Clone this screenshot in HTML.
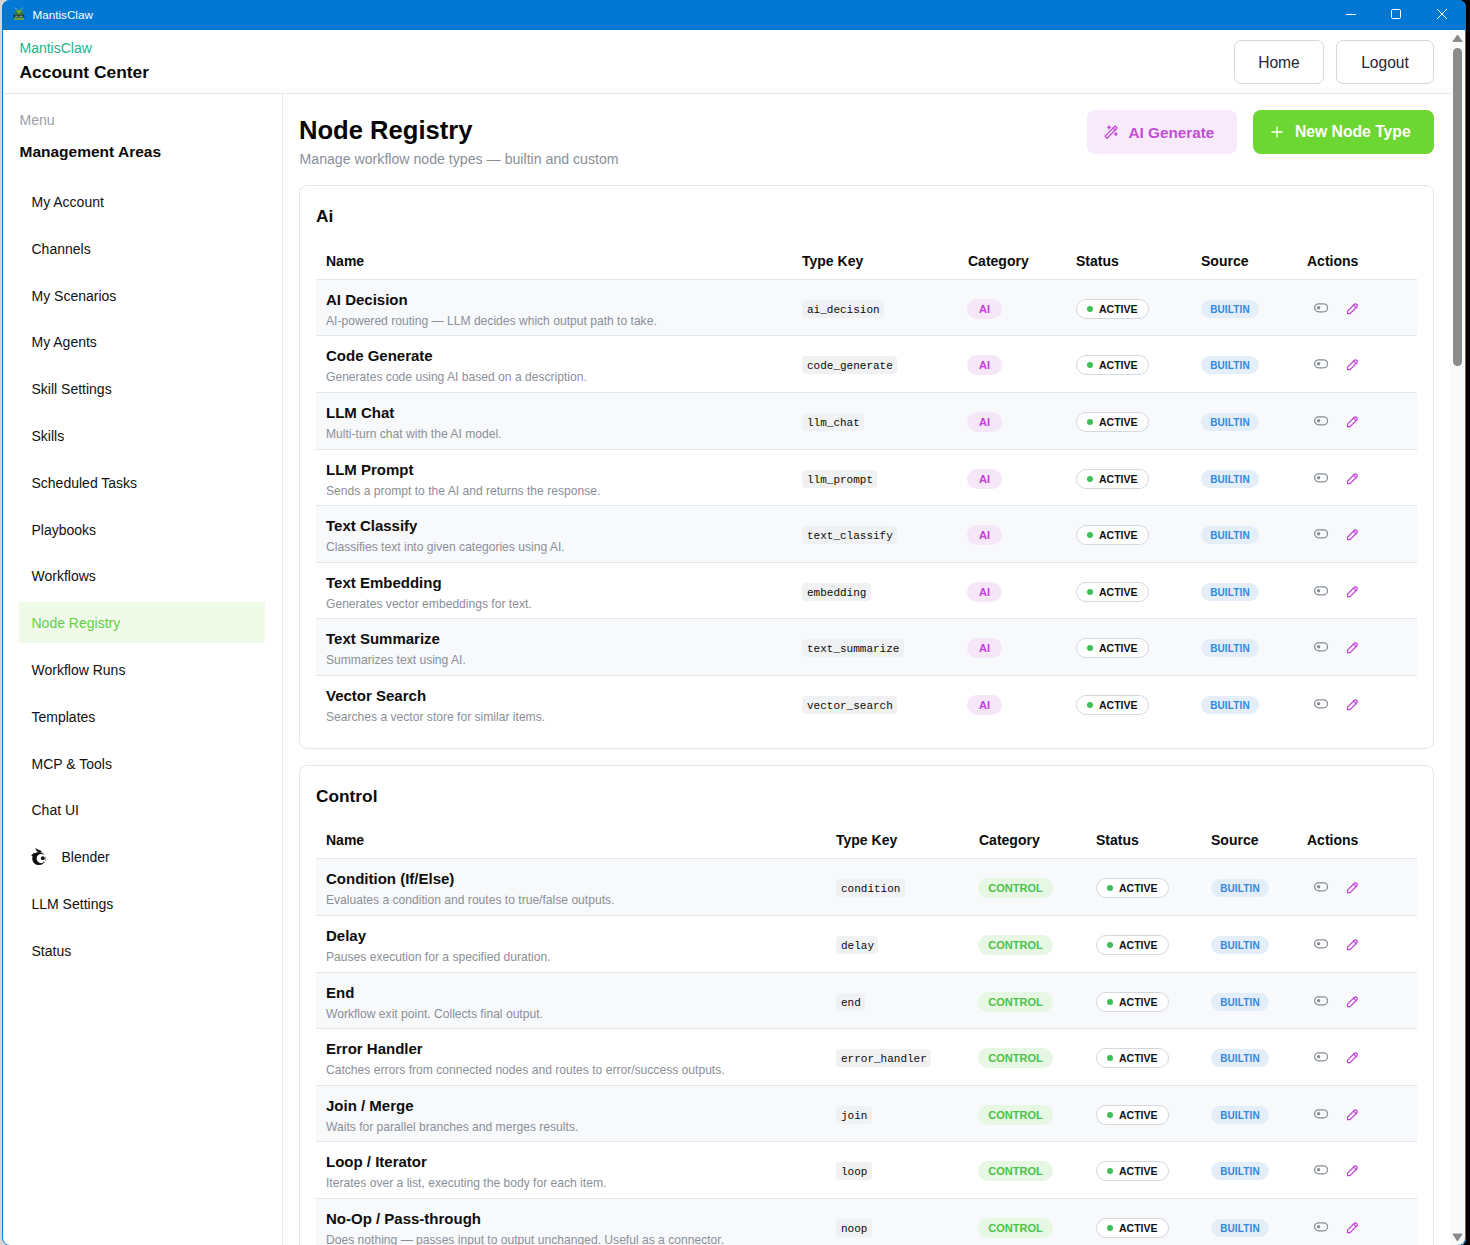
<!DOCTYPE html><html><head><meta charset="utf-8"><style>
*{box-sizing:border-box;margin:0;padding:0}
html,body{width:1470px;height:1245px;overflow:hidden;background:#000;font-family:"Liberation Sans",sans-serif;color:#111;position:relative}
.a{position:absolute;line-height:1;white-space:nowrap}
#bgl{position:absolute;left:0;top:0;width:700px;height:1245px;background:#d8d5d2}
#clip{position:absolute;left:2px;top:0;width:1464px;height:1246px;border-radius:8px;overflow:hidden;background:#fff}
#inner{position:absolute;left:-2px;top:0;width:1470px;height:1247px}
#frame{position:absolute;left:2px;top:0;width:1464px;height:1246px;border:1px solid #0078d4;border-radius:8px}
#title{position:absolute;left:0;top:0;width:1470px;height:30px;background:#0078d4}
.btn{position:absolute;border:1px solid #d3d8df;border-radius:7px;background:#fff;font-size:15.6px;color:#1f2533}
.nav{position:absolute;left:19px;width:246px;height:41px}
.nav span{position:absolute;left:12.5px;top:14.2px;font-size:14px;line-height:1;color:#111}
.nav.on{background:#effbe8}
.nav.on span{color:#67cf45}
.card{position:absolute;left:299px;width:1135px;border:1px solid #e3e7ec;border-radius:8px;background:#fff}
.th{position:absolute;font-size:14px;font-weight:bold;line-height:1;color:#0b0b0b}
.row{position:absolute;left:316px;width:1101px}
.row.g{background:#f8f9fb}
.ln{position:absolute;left:316px;width:1101px;height:1px;background:#e3e7ec}
.nm{position:absolute;left:10px;font-size:15px;font-weight:bold;line-height:1;color:#0d0d0d}
.ds{position:absolute;left:10px;font-size:12.1px;line-height:1;color:#8a8f98}
.code{position:absolute;height:18px;background:#f0f1f3;border-radius:4px;font-family:"Liberation Mono",monospace;font-size:11px;line-height:20px;padding:0 4.4px 0 5px;color:#0a0a0a}
.bdg{position:absolute;height:20px;border-radius:10px;font-size:11px;font-weight:bold;line-height:20px;text-align:center}
.ai{background:#f5e6f8;color:#c23fd8}
.ctl{background:#e6f7e4;color:#4cc14a}
.act{position:absolute;height:20px;border:1px solid #d3d8df;border-radius:10px;background:#fff;font-size:10.5px;font-weight:bold;line-height:18px;color:#111}
.act i{position:absolute;left:10px;top:6px;width:6px;height:6px;border-radius:3px;background:#3fbf55}
.act b{position:absolute;left:22px;top:0}
.blt{position:absolute;height:18px;border-radius:9px;background:#e4eef9;color:#3388e0;font-size:10px;font-weight:bold;line-height:20px;text-align:center;letter-spacing:0.15px}
.ic{position:absolute}
</style></head><body>
<div id="bgl"></div><div id="clip"><div id="inner"><div id="title"></div>
<svg class="ic" style="left:13px;top:6.5px" width="12" height="14" viewBox="0 0 12 14"><path d="M2.2 0.8 L4.6 3.4 M9.8 0.8 L7.4 3.4" stroke="#8cc7a0" stroke-width="0.9" stroke-linecap="round"/><path d="M1.2 8 C1.2 4.5 3 2.8 6 2.8 C9 2.8 10.8 4.5 10.8 8 Z" fill="#4f8a2c"/><ellipse cx="6" cy="4.6" rx="1.6" ry="1.4" fill="#7bb33e"/><ellipse cx="3" cy="6.3" rx="1.1" ry="1.2" fill="#1f6f6a"/><ellipse cx="9" cy="6.3" rx="1.1" ry="1.2" fill="#1f6f6a"/><rect x="0.6" y="7.8" width="10.8" height="2.8" rx="0.6" fill="#16261b"/><rect x="2" y="8.7" width="3.2" height="1" fill="#9db3bd"/><rect x="6.2" y="8.7" width="3.8" height="1" fill="#9db3bd"/><rect x="1" y="10.6" width="10" height="2.4" rx="0.5" fill="#6f9b38"/></svg>
<div class="a" style="left:32.5px;top:8.90px;font-size:11.7px;color:#fff">MantisClaw</div>
<div style="position:absolute;left:1346px;top:14px;width:10px;height:1px;background:#fff"></div>
<div style="position:absolute;left:1391px;top:9px;width:10px;height:10px;border:1px solid #fff;border-radius:1.5px"></div>
<svg class="ic" style="left:1436px;top:8px" width="12" height="12" viewBox="0 0 12 12"><path d="M1 1 L11 11 M11 1 L1 11" stroke="#fff" stroke-width="1"/></svg>
<div class="a" style="left:19.5px;top:41.05px;font-size:14px;color:#22b38c">MantisClaw</div>
<div class="a" style="left:19.5px;top:63.87px;font-size:17.4px;font-weight:bold;color:#0a0a0a">Account Center</div>
<div class="btn" style="left:1234px;top:40px;width:90px;height:44px"><span class="a" style="left:0;width:88px;text-align:center;top:14.1px">Home</span></div>
<div class="btn" style="left:1336px;top:40px;width:98px;height:44px"><span class="a" style="left:0;width:96px;text-align:center;top:14.1px">Logout</span></div>
<div style="position:absolute;left:3px;top:93px;width:1447px;height:1px;background:#e3e7ec"></div>
<div style="position:absolute;left:282px;top:94px;width:1px;height:1160px;background:#e3e7ec"></div>
<div class="a" style="left:19.5px;top:112.95px;font-size:14px;color:#9aa0a8">Menu</div>
<div class="a" style="left:19.5px;top:144.26px;font-size:15.5px;font-weight:bold;color:#0a0a0a">Management Areas</div>
<div class="nav" style="top:180.80px"><span>My Account</span></div>
<div class="nav" style="top:227.60px"><span>Channels</span></div>
<div class="nav" style="top:274.40px"><span>My Scenarios</span></div>
<div class="nav" style="top:321.20px"><span>My Agents</span></div>
<div class="nav" style="top:368.00px"><span>Skill Settings</span></div>
<div class="nav" style="top:414.80px"><span>Skills</span></div>
<div class="nav" style="top:461.60px"><span>Scheduled Tasks</span></div>
<div class="nav" style="top:508.40px"><span>Playbooks</span></div>
<div class="nav" style="top:555.20px"><span>Workflows</span></div>
<div class="nav on" style="top:602.00px"><span>Node Registry</span></div>
<div class="nav" style="top:648.80px"><span>Workflow Runs</span></div>
<div class="nav" style="top:695.60px"><span>Templates</span></div>
<div class="nav" style="top:742.40px"><span>MCP &amp; Tools</span></div>
<div class="nav" style="top:789.20px"><span>Chat UI</span></div>
<div class="nav" style="top:836.00px"><svg class="ic" style="left:11px;top:11.00px" width="17" height="19" viewBox="0 0 17 19"><path fill-rule="evenodd" fill="#111" d="M2.2 11.5 A6.6 6.6 0 1 0 15.4 11.5 A6.6 6.6 0 1 0 2.2 11.5 Z M6.6 11.6 A4.6 4.6 0 1 0 15.8 11.6 A4.6 4.6 0 1 0 6.6 11.6 Z"/><circle cx="12.8" cy="11.2" r="1.9" fill="#111"/><path d="M5 1 L12 4.3 L10 5.6 L7 4.6 Z" fill="#111"/><path d="M1 8.6 L4 5.9 L6.2 6.4 L3.2 9.2 Z" fill="#111"/><circle cx="13.8" cy="15.2" r="0.6" fill="#111"/></svg><span style="left:42.5px">Blender</span></div>
<div class="nav" style="top:882.80px"><span>LLM Settings</span></div>
<div class="nav" style="top:929.60px"><span>Status</span></div>
<div class="a" style="left:299px;top:117.63px;font-size:25.6px;font-weight:bold;color:#050505">Node Registry</div>
<div class="a" style="left:299.5px;top:152.02px;font-size:14.15px;color:#8a9099">Manage workflow node types — builtin and custom</div>
<div style="position:absolute;left:1087px;top:110px;width:150px;height:44px;background:#f7eafb;border-radius:8px"></div>
<svg class="ic" style="left:1103px;top:123.5px" width="16.2" height="16.2" viewBox="0 0 24 24" fill="none" stroke="#c44dd8" stroke-width="2" stroke-linecap="round" stroke-linejoin="round"><path d="M6 21l15 -15l-3 -3l-15 15l3 3"/><path d="M15 6l3 3"/><path d="M9 3a2 2 0 0 0 2 2a2 2 0 0 0 -2 2a2 2 0 0 0 -2 -2a2 2 0 0 0 2 -2"/><path d="M19 13a2 2 0 0 0 2 2a2 2 0 0 0 -2 2a2 2 0 0 0 -2 -2a2 2 0 0 0 2 -2"/></svg>
<div class="a" style="left:1128.5px;top:124.65px;font-size:15.3px;font-weight:bold;color:#c44dd8">AI Generate</div>
<div style="position:absolute;left:1253px;top:110px;width:181px;height:44px;background:#6cd632;border-radius:8px"></div>
<svg class="ic" style="left:1271px;top:126px" width="12" height="12" viewBox="0 0 12 12"><path d="M6 0.5 V11.5 M0.5 6 H11.5" stroke="#fff" stroke-width="1.3"/></svg>
<div class="a" style="left:1295px;top:124.31px;font-size:15.7px;font-weight:bold;color:#fff">New Node Type</div>
<div class="card" style="top:185px;height:564px"></div>
<div class="a" style="left:316px;top:207.96px;font-size:17.3px;font-weight:bold;color:#0a0a0a">Ai</div>
<div class="th" style="left:326px;top:254.05px">Name</div>
<div class="th" style="left:802px;top:254.05px">Type Key</div>
<div class="th" style="left:968px;top:254.05px">Category</div>
<div class="th" style="left:1076px;top:254.05px">Status</div>
<div class="th" style="left:1201px;top:254.05px">Source</div>
<div class="th" style="left:1307px;top:254.05px">Actions</div>
<div class="ln" style="top:279px"></div>
<div class="row g" style="top:280px;height:55px">
<div class="nm" style="top:12.20px">AI Decision</div>
<div class="ds" style="top:34.56px">AI-powered routing — LLM decides which output path to take.</div>
</div>
<div class="code" style="left:802px;top:300.00px">ai_decision</div>
<div class="bdg ai" style="left:967px;top:299.00px;width:35px">AI</div>
<div class="act" style="left:1076px;top:299.30px;width:73px"><i></i><b>ACTIVE</b></div>
<div class="blt" style="left:1201px;top:300.00px;width:58px">BUILTIN</div>
<svg class="ic" style="left:1313px;top:302.20px" width="16" height="11" viewBox="0 0 16 11"><rect x="1.6" y="1.8" width="13" height="8" rx="4" fill="none" stroke="#878e98" stroke-width="1.25"/><circle cx="5.6" cy="5.8" r="1.7" fill="#878e98"/></svg>
<svg class="ic" style="left:1345.3px;top:301.20px" width="15.2" height="15.2" viewBox="0 0 24 24" fill="none" stroke="#c23fd8" stroke-width="1.9" stroke-linecap="round" stroke-linejoin="round"><path d="M4 20h4l10.5 -10.5a2.828 2.828 0 1 0 -4 -4l-10.5 10.5v4"/><path d="M13.5 6.5l4 4"/></svg>
<div class="ln" style="top:335px"></div>
<div class="row" style="top:336px;height:56px">
<div class="nm" style="top:12.20px">Code Generate</div>
<div class="ds" style="top:34.56px">Generates code using AI based on a description.</div>
</div>
<div class="code" style="left:802px;top:356.00px">code_generate</div>
<div class="bdg ai" style="left:967px;top:355.00px;width:35px">AI</div>
<div class="act" style="left:1076px;top:355.30px;width:73px"><i></i><b>ACTIVE</b></div>
<div class="blt" style="left:1201px;top:356.00px;width:58px">BUILTIN</div>
<svg class="ic" style="left:1313px;top:358.20px" width="16" height="11" viewBox="0 0 16 11"><rect x="1.6" y="1.8" width="13" height="8" rx="4" fill="none" stroke="#878e98" stroke-width="1.25"/><circle cx="5.6" cy="5.8" r="1.7" fill="#878e98"/></svg>
<svg class="ic" style="left:1345.3px;top:357.20px" width="15.2" height="15.2" viewBox="0 0 24 24" fill="none" stroke="#c23fd8" stroke-width="1.9" stroke-linecap="round" stroke-linejoin="round"><path d="M4 20h4l10.5 -10.5a2.828 2.828 0 1 0 -4 -4l-10.5 10.5v4"/><path d="M13.5 6.5l4 4"/></svg>
<div class="ln" style="top:392px"></div>
<div class="row g" style="top:393px;height:56px">
<div class="nm" style="top:12.20px">LLM Chat</div>
<div class="ds" style="top:34.56px">Multi-turn chat with the AI model.</div>
</div>
<div class="code" style="left:802px;top:413.00px">llm_chat</div>
<div class="bdg ai" style="left:967px;top:412.00px;width:35px">AI</div>
<div class="act" style="left:1076px;top:412.30px;width:73px"><i></i><b>ACTIVE</b></div>
<div class="blt" style="left:1201px;top:413.00px;width:58px">BUILTIN</div>
<svg class="ic" style="left:1313px;top:415.20px" width="16" height="11" viewBox="0 0 16 11"><rect x="1.6" y="1.8" width="13" height="8" rx="4" fill="none" stroke="#878e98" stroke-width="1.25"/><circle cx="5.6" cy="5.8" r="1.7" fill="#878e98"/></svg>
<svg class="ic" style="left:1345.3px;top:414.20px" width="15.2" height="15.2" viewBox="0 0 24 24" fill="none" stroke="#c23fd8" stroke-width="1.9" stroke-linecap="round" stroke-linejoin="round"><path d="M4 20h4l10.5 -10.5a2.828 2.828 0 1 0 -4 -4l-10.5 10.5v4"/><path d="M13.5 6.5l4 4"/></svg>
<div class="ln" style="top:449px"></div>
<div class="row" style="top:450px;height:55px">
<div class="nm" style="top:12.20px">LLM Prompt</div>
<div class="ds" style="top:34.56px">Sends a prompt to the AI and returns the response.</div>
</div>
<div class="code" style="left:802px;top:470.00px">llm_prompt</div>
<div class="bdg ai" style="left:967px;top:469.00px;width:35px">AI</div>
<div class="act" style="left:1076px;top:469.30px;width:73px"><i></i><b>ACTIVE</b></div>
<div class="blt" style="left:1201px;top:470.00px;width:58px">BUILTIN</div>
<svg class="ic" style="left:1313px;top:472.20px" width="16" height="11" viewBox="0 0 16 11"><rect x="1.6" y="1.8" width="13" height="8" rx="4" fill="none" stroke="#878e98" stroke-width="1.25"/><circle cx="5.6" cy="5.8" r="1.7" fill="#878e98"/></svg>
<svg class="ic" style="left:1345.3px;top:471.20px" width="15.2" height="15.2" viewBox="0 0 24 24" fill="none" stroke="#c23fd8" stroke-width="1.9" stroke-linecap="round" stroke-linejoin="round"><path d="M4 20h4l10.5 -10.5a2.828 2.828 0 1 0 -4 -4l-10.5 10.5v4"/><path d="M13.5 6.5l4 4"/></svg>
<div class="ln" style="top:505px"></div>
<div class="row g" style="top:506px;height:56px">
<div class="nm" style="top:12.20px">Text Classify</div>
<div class="ds" style="top:34.56px">Classifies text into given categories using AI.</div>
</div>
<div class="code" style="left:802px;top:526.00px">text_classify</div>
<div class="bdg ai" style="left:967px;top:525.00px;width:35px">AI</div>
<div class="act" style="left:1076px;top:525.30px;width:73px"><i></i><b>ACTIVE</b></div>
<div class="blt" style="left:1201px;top:526.00px;width:58px">BUILTIN</div>
<svg class="ic" style="left:1313px;top:528.20px" width="16" height="11" viewBox="0 0 16 11"><rect x="1.6" y="1.8" width="13" height="8" rx="4" fill="none" stroke="#878e98" stroke-width="1.25"/><circle cx="5.6" cy="5.8" r="1.7" fill="#878e98"/></svg>
<svg class="ic" style="left:1345.3px;top:527.20px" width="15.2" height="15.2" viewBox="0 0 24 24" fill="none" stroke="#c23fd8" stroke-width="1.9" stroke-linecap="round" stroke-linejoin="round"><path d="M4 20h4l10.5 -10.5a2.828 2.828 0 1 0 -4 -4l-10.5 10.5v4"/><path d="M13.5 6.5l4 4"/></svg>
<div class="ln" style="top:562px"></div>
<div class="row" style="top:563px;height:55px">
<div class="nm" style="top:12.20px">Text Embedding</div>
<div class="ds" style="top:34.56px">Generates vector embeddings for text.</div>
</div>
<div class="code" style="left:802px;top:583.00px">embedding</div>
<div class="bdg ai" style="left:967px;top:582.00px;width:35px">AI</div>
<div class="act" style="left:1076px;top:582.30px;width:73px"><i></i><b>ACTIVE</b></div>
<div class="blt" style="left:1201px;top:583.00px;width:58px">BUILTIN</div>
<svg class="ic" style="left:1313px;top:585.20px" width="16" height="11" viewBox="0 0 16 11"><rect x="1.6" y="1.8" width="13" height="8" rx="4" fill="none" stroke="#878e98" stroke-width="1.25"/><circle cx="5.6" cy="5.8" r="1.7" fill="#878e98"/></svg>
<svg class="ic" style="left:1345.3px;top:584.20px" width="15.2" height="15.2" viewBox="0 0 24 24" fill="none" stroke="#c23fd8" stroke-width="1.9" stroke-linecap="round" stroke-linejoin="round"><path d="M4 20h4l10.5 -10.5a2.828 2.828 0 1 0 -4 -4l-10.5 10.5v4"/><path d="M13.5 6.5l4 4"/></svg>
<div class="ln" style="top:618px"></div>
<div class="row g" style="top:619px;height:56px">
<div class="nm" style="top:12.20px">Text Summarize</div>
<div class="ds" style="top:34.56px">Summarizes text using AI.</div>
</div>
<div class="code" style="left:802px;top:639.00px">text_summarize</div>
<div class="bdg ai" style="left:967px;top:638.00px;width:35px">AI</div>
<div class="act" style="left:1076px;top:638.30px;width:73px"><i></i><b>ACTIVE</b></div>
<div class="blt" style="left:1201px;top:639.00px;width:58px">BUILTIN</div>
<svg class="ic" style="left:1313px;top:641.20px" width="16" height="11" viewBox="0 0 16 11"><rect x="1.6" y="1.8" width="13" height="8" rx="4" fill="none" stroke="#878e98" stroke-width="1.25"/><circle cx="5.6" cy="5.8" r="1.7" fill="#878e98"/></svg>
<svg class="ic" style="left:1345.3px;top:640.20px" width="15.2" height="15.2" viewBox="0 0 24 24" fill="none" stroke="#c23fd8" stroke-width="1.9" stroke-linecap="round" stroke-linejoin="round"><path d="M4 20h4l10.5 -10.5a2.828 2.828 0 1 0 -4 -4l-10.5 10.5v4"/><path d="M13.5 6.5l4 4"/></svg>
<div class="ln" style="top:675px"></div>
<div class="row" style="top:676px;height:56px">
<div class="nm" style="top:12.20px">Vector Search</div>
<div class="ds" style="top:34.56px">Searches a vector store for similar items.</div>
</div>
<div class="code" style="left:802px;top:696.00px">vector_search</div>
<div class="bdg ai" style="left:967px;top:695.00px;width:35px">AI</div>
<div class="act" style="left:1076px;top:695.30px;width:73px"><i></i><b>ACTIVE</b></div>
<div class="blt" style="left:1201px;top:696.00px;width:58px">BUILTIN</div>
<svg class="ic" style="left:1313px;top:698.20px" width="16" height="11" viewBox="0 0 16 11"><rect x="1.6" y="1.8" width="13" height="8" rx="4" fill="none" stroke="#878e98" stroke-width="1.25"/><circle cx="5.6" cy="5.8" r="1.7" fill="#878e98"/></svg>
<svg class="ic" style="left:1345.3px;top:697.20px" width="15.2" height="15.2" viewBox="0 0 24 24" fill="none" stroke="#c23fd8" stroke-width="1.9" stroke-linecap="round" stroke-linejoin="round"><path d="M4 20h4l10.5 -10.5a2.828 2.828 0 1 0 -4 -4l-10.5 10.5v4"/><path d="M13.5 6.5l4 4"/></svg>
<div class="card" style="top:765px;height:700px"></div>
<div class="a" style="left:316px;top:787.96px;font-size:17.3px;font-weight:bold;color:#0a0a0a">Control</div>
<div class="th" style="left:326px;top:833.35px">Name</div>
<div class="th" style="left:836px;top:833.35px">Type Key</div>
<div class="th" style="left:979px;top:833.35px">Category</div>
<div class="th" style="left:1096px;top:833.35px">Status</div>
<div class="th" style="left:1211px;top:833.35px">Source</div>
<div class="th" style="left:1307px;top:833.35px">Actions</div>
<div class="ln" style="top:858px"></div>
<div class="row g" style="top:859px;height:56px">
<div class="nm" style="top:12.20px">Condition (If/Else)</div>
<div class="ds" style="top:34.56px">Evaluates a condition and routes to true/false outputs.</div>
</div>
<div class="code" style="left:836px;top:879.00px">condition</div>
<div class="bdg ctl" style="left:978px;top:878.00px;width:75px">CONTROL</div>
<div class="act" style="left:1096px;top:878.30px;width:73px"><i></i><b>ACTIVE</b></div>
<div class="blt" style="left:1211px;top:879.00px;width:58px">BUILTIN</div>
<svg class="ic" style="left:1313px;top:881.20px" width="16" height="11" viewBox="0 0 16 11"><rect x="1.6" y="1.8" width="13" height="8" rx="4" fill="none" stroke="#878e98" stroke-width="1.25"/><circle cx="5.6" cy="5.8" r="1.7" fill="#878e98"/></svg>
<svg class="ic" style="left:1345.3px;top:880.20px" width="15.2" height="15.2" viewBox="0 0 24 24" fill="none" stroke="#c23fd8" stroke-width="1.9" stroke-linecap="round" stroke-linejoin="round"><path d="M4 20h4l10.5 -10.5a2.828 2.828 0 1 0 -4 -4l-10.5 10.5v4"/><path d="M13.5 6.5l4 4"/></svg>
<div class="ln" style="top:915px"></div>
<div class="row" style="top:916px;height:56px">
<div class="nm" style="top:12.20px">Delay</div>
<div class="ds" style="top:34.56px">Pauses execution for a specified duration.</div>
</div>
<div class="code" style="left:836px;top:936.00px">delay</div>
<div class="bdg ctl" style="left:978px;top:935.00px;width:75px">CONTROL</div>
<div class="act" style="left:1096px;top:935.30px;width:73px"><i></i><b>ACTIVE</b></div>
<div class="blt" style="left:1211px;top:936.00px;width:58px">BUILTIN</div>
<svg class="ic" style="left:1313px;top:938.20px" width="16" height="11" viewBox="0 0 16 11"><rect x="1.6" y="1.8" width="13" height="8" rx="4" fill="none" stroke="#878e98" stroke-width="1.25"/><circle cx="5.6" cy="5.8" r="1.7" fill="#878e98"/></svg>
<svg class="ic" style="left:1345.3px;top:937.20px" width="15.2" height="15.2" viewBox="0 0 24 24" fill="none" stroke="#c23fd8" stroke-width="1.9" stroke-linecap="round" stroke-linejoin="round"><path d="M4 20h4l10.5 -10.5a2.828 2.828 0 1 0 -4 -4l-10.5 10.5v4"/><path d="M13.5 6.5l4 4"/></svg>
<div class="ln" style="top:972px"></div>
<div class="row g" style="top:973px;height:55px">
<div class="nm" style="top:12.20px">End</div>
<div class="ds" style="top:34.56px">Workflow exit point. Collects final output.</div>
</div>
<div class="code" style="left:836px;top:993.00px">end</div>
<div class="bdg ctl" style="left:978px;top:992.00px;width:75px">CONTROL</div>
<div class="act" style="left:1096px;top:992.30px;width:73px"><i></i><b>ACTIVE</b></div>
<div class="blt" style="left:1211px;top:993.00px;width:58px">BUILTIN</div>
<svg class="ic" style="left:1313px;top:995.20px" width="16" height="11" viewBox="0 0 16 11"><rect x="1.6" y="1.8" width="13" height="8" rx="4" fill="none" stroke="#878e98" stroke-width="1.25"/><circle cx="5.6" cy="5.8" r="1.7" fill="#878e98"/></svg>
<svg class="ic" style="left:1345.3px;top:994.20px" width="15.2" height="15.2" viewBox="0 0 24 24" fill="none" stroke="#c23fd8" stroke-width="1.9" stroke-linecap="round" stroke-linejoin="round"><path d="M4 20h4l10.5 -10.5a2.828 2.828 0 1 0 -4 -4l-10.5 10.5v4"/><path d="M13.5 6.5l4 4"/></svg>
<div class="ln" style="top:1028px"></div>
<div class="row" style="top:1029px;height:56px">
<div class="nm" style="top:12.20px">Error Handler</div>
<div class="ds" style="top:34.56px">Catches errors from connected nodes and routes to error/success outputs.</div>
</div>
<div class="code" style="left:836px;top:1049.00px">error_handler</div>
<div class="bdg ctl" style="left:978px;top:1048.00px;width:75px">CONTROL</div>
<div class="act" style="left:1096px;top:1048.30px;width:73px"><i></i><b>ACTIVE</b></div>
<div class="blt" style="left:1211px;top:1049.00px;width:58px">BUILTIN</div>
<svg class="ic" style="left:1313px;top:1051.20px" width="16" height="11" viewBox="0 0 16 11"><rect x="1.6" y="1.8" width="13" height="8" rx="4" fill="none" stroke="#878e98" stroke-width="1.25"/><circle cx="5.6" cy="5.8" r="1.7" fill="#878e98"/></svg>
<svg class="ic" style="left:1345.3px;top:1050.20px" width="15.2" height="15.2" viewBox="0 0 24 24" fill="none" stroke="#c23fd8" stroke-width="1.9" stroke-linecap="round" stroke-linejoin="round"><path d="M4 20h4l10.5 -10.5a2.828 2.828 0 1 0 -4 -4l-10.5 10.5v4"/><path d="M13.5 6.5l4 4"/></svg>
<div class="ln" style="top:1085px"></div>
<div class="row g" style="top:1086px;height:55px">
<div class="nm" style="top:12.20px">Join / Merge</div>
<div class="ds" style="top:34.56px">Waits for parallel branches and merges results.</div>
</div>
<div class="code" style="left:836px;top:1106.00px">join</div>
<div class="bdg ctl" style="left:978px;top:1105.00px;width:75px">CONTROL</div>
<div class="act" style="left:1096px;top:1105.30px;width:73px"><i></i><b>ACTIVE</b></div>
<div class="blt" style="left:1211px;top:1106.00px;width:58px">BUILTIN</div>
<svg class="ic" style="left:1313px;top:1108.20px" width="16" height="11" viewBox="0 0 16 11"><rect x="1.6" y="1.8" width="13" height="8" rx="4" fill="none" stroke="#878e98" stroke-width="1.25"/><circle cx="5.6" cy="5.8" r="1.7" fill="#878e98"/></svg>
<svg class="ic" style="left:1345.3px;top:1107.20px" width="15.2" height="15.2" viewBox="0 0 24 24" fill="none" stroke="#c23fd8" stroke-width="1.9" stroke-linecap="round" stroke-linejoin="round"><path d="M4 20h4l10.5 -10.5a2.828 2.828 0 1 0 -4 -4l-10.5 10.5v4"/><path d="M13.5 6.5l4 4"/></svg>
<div class="ln" style="top:1141px"></div>
<div class="row" style="top:1142px;height:56px">
<div class="nm" style="top:12.20px">Loop / Iterator</div>
<div class="ds" style="top:34.56px">Iterates over a list, executing the body for each item.</div>
</div>
<div class="code" style="left:836px;top:1162.00px">loop</div>
<div class="bdg ctl" style="left:978px;top:1161.00px;width:75px">CONTROL</div>
<div class="act" style="left:1096px;top:1161.30px;width:73px"><i></i><b>ACTIVE</b></div>
<div class="blt" style="left:1211px;top:1162.00px;width:58px">BUILTIN</div>
<svg class="ic" style="left:1313px;top:1164.20px" width="16" height="11" viewBox="0 0 16 11"><rect x="1.6" y="1.8" width="13" height="8" rx="4" fill="none" stroke="#878e98" stroke-width="1.25"/><circle cx="5.6" cy="5.8" r="1.7" fill="#878e98"/></svg>
<svg class="ic" style="left:1345.3px;top:1163.20px" width="15.2" height="15.2" viewBox="0 0 24 24" fill="none" stroke="#c23fd8" stroke-width="1.9" stroke-linecap="round" stroke-linejoin="round"><path d="M4 20h4l10.5 -10.5a2.828 2.828 0 1 0 -4 -4l-10.5 10.5v4"/><path d="M13.5 6.5l4 4"/></svg>
<div class="ln" style="top:1198px"></div>
<div class="row g" style="top:1199px;height:55px">
<div class="nm" style="top:12.20px">No-Op / Pass-through</div>
<div class="ds" style="top:34.56px">Does nothing — passes input to output unchanged. Useful as a connector.</div>
</div>
<div class="code" style="left:836px;top:1219.00px">noop</div>
<div class="bdg ctl" style="left:978px;top:1218.00px;width:75px">CONTROL</div>
<div class="act" style="left:1096px;top:1218.30px;width:73px"><i></i><b>ACTIVE</b></div>
<div class="blt" style="left:1211px;top:1219.00px;width:58px">BUILTIN</div>
<svg class="ic" style="left:1313px;top:1221.20px" width="16" height="11" viewBox="0 0 16 11"><rect x="1.6" y="1.8" width="13" height="8" rx="4" fill="none" stroke="#878e98" stroke-width="1.25"/><circle cx="5.6" cy="5.8" r="1.7" fill="#878e98"/></svg>
<svg class="ic" style="left:1345.3px;top:1220.20px" width="15.2" height="15.2" viewBox="0 0 24 24" fill="none" stroke="#c23fd8" stroke-width="1.9" stroke-linecap="round" stroke-linejoin="round"><path d="M4 20h4l10.5 -10.5a2.828 2.828 0 1 0 -4 -4l-10.5 10.5v4"/><path d="M13.5 6.5l4 4"/></svg>
<div class="ln" style="top:1254px"></div>
<div class="row" style="top:1255px;height:56px">
<div class="nm" style="top:12.20px">Output</div>
<div class="ds" style="top:34.56px"></div>
</div>
<div class="code" style="left:836px;top:1275.00px">output</div>
<div class="bdg ctl" style="left:978px;top:1274.00px;width:75px">CONTROL</div>
<div class="act" style="left:1096px;top:1274.30px;width:73px"><i></i><b>ACTIVE</b></div>
<div class="blt" style="left:1211px;top:1275.00px;width:58px">BUILTIN</div>
<svg class="ic" style="left:1313px;top:1277.20px" width="16" height="11" viewBox="0 0 16 11"><rect x="1.6" y="1.8" width="13" height="8" rx="4" fill="none" stroke="#878e98" stroke-width="1.25"/><circle cx="5.6" cy="5.8" r="1.7" fill="#878e98"/></svg>
<svg class="ic" style="left:1345.3px;top:1276.20px" width="15.2" height="15.2" viewBox="0 0 24 24" fill="none" stroke="#c23fd8" stroke-width="1.9" stroke-linecap="round" stroke-linejoin="round"><path d="M4 20h4l10.5 -10.5a2.828 2.828 0 1 0 -4 -4l-10.5 10.5v4"/><path d="M13.5 6.5l4 4"/></svg>
<div style="position:absolute;left:1450px;top:30px;width:15px;height:1215px;background:#fafafa"></div>
<svg class="ic" style="left:1452px;top:34.3px" width="11" height="9" viewBox="0 0 11 9"><path d="M5.5 1 L10 7.4 L1 7.4 Z" fill="#8a8a8a" stroke="#8a8a8a" stroke-linejoin="round" stroke-width="1"/></svg>
<div style="position:absolute;left:1453px;top:48px;width:9px;height:318px;background:#8b8b8b;border-radius:4.5px"></div>
<svg class="ic" style="left:1452px;top:1233px" width="11" height="9" viewBox="0 0 11 9"><path d="M5.5 8 L10 1 L1 1 Z" fill="#8a8a8a" stroke="#8a8a8a" stroke-linejoin="round" stroke-width="1"/></svg>
</div></div><div id="frame"></div>
</body></html>
